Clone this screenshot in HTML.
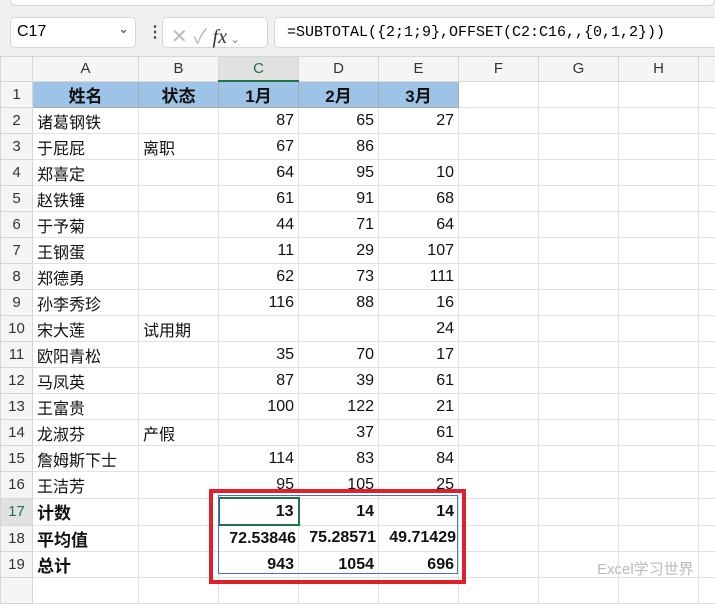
<!DOCTYPE html><html><head><meta charset="utf-8"><style>
body{margin:0;width:715px;height:587px;overflow:hidden;background:#fff;font-family:"Liberation Sans","Noto Sans CJK SC",sans-serif;position:relative}
.tb{position:absolute;left:0;top:0;width:715px;height:57px;background:#f0f0f0}
.box{position:absolute;background:#fff;border:1px solid #d6d6d6;border-radius:5px;box-sizing:border-box}
table{border-collapse:collapse;table-layout:fixed;position:absolute;left:0;top:56px;width:728px}
td{border:1px solid #e1e1e1;height:25px;padding:0 4px;font-size:16px;white-space:nowrap;overflow:hidden;color:#111}
tr.h td{height:23px;background:#f5f5f5;text-align:center;color:#333;font-size:15px;border-color:#d6d6d6}
td.r{background:#f5f5f5;text-align:center;color:#333;font-size:15px;padding:0;border-color:#d6d6d6}
.n{text-align:right}.b{font-weight:bold}
tr.t td.c{background:#9dc3e6;font-weight:bold;text-align:center;font-size:17px;border-color:#aaa}
</style></head><body>
<div class="tb"></div>
<div class="box" style="left:10px;top:-6px;width:705px;height:12px;border-radius:6px"></div>
<div class="box" style="left:10px;top:17px;width:126px;height:31px;font-size:16px;padding:5px 0 0 6px">C17<span style="position:absolute;right:6px;top:3px;font-size:13px;color:#444">&#8964;</span></div>
<div style="position:absolute;left:147px;top:22px;font-size:16px;color:#444;font-weight:bold">&#8942;</div>
<div class="box" style="left:162px;top:17px;width:106px;height:31px;color:#bbb;font-size:20px;padding:2px 0 0 8px">✕ ✓ <i style="color:#333;font-family:'Liberation Serif',serif">fx</i><span style="font-size:12px;color:#888"> &#8964;</span></div>
<div class="box" style="left:274px;top:17px;width:450px;height:31px;font-size:15px;padding:6px 0 0 12px;font-family:'Liberation Mono',monospace">=SUBTOTAL({2;1;9},OFFSET(C2:C16,,{0,1,2}))</div>
<table>
<colgroup><col style="width:32px"><col style="width:106px"><col style="width:80px"><col style="width:80px"><col style="width:80px"><col style="width:80px"><col style="width:80px"><col style="width:80px"><col style="width:80px"><col style="width:30px"></colgroup>
<tr class="h"><td></td><td>A</td><td>B</td><td style="background:#e1e1e1;color:#217346;border-bottom:2px solid #217346">C</td><td>D</td><td>E</td><td>F</td><td>G</td><td>H</td><td></td></tr>
<tr class="t"><td class="r">1</td><td class="c">姓名</td><td class="c">状态</td><td class="c">1月</td><td class="c">2月</td><td class="c">3月</td><td></td><td></td><td></td><td></td></tr>
<tr><td class="r">2</td><td>诸葛钢铁</td><td></td><td class="n">87</td><td class="n">65</td><td class="n">27</td><td></td><td></td><td></td><td></td></tr>
<tr><td class="r">3</td><td>于屁屁</td><td>离职</td><td class="n">67</td><td class="n">86</td><td class="n"></td><td></td><td></td><td></td><td></td></tr>
<tr><td class="r">4</td><td>郑喜定</td><td></td><td class="n">64</td><td class="n">95</td><td class="n">10</td><td></td><td></td><td></td><td></td></tr>
<tr><td class="r">5</td><td>赵铁锤</td><td></td><td class="n">61</td><td class="n">91</td><td class="n">68</td><td></td><td></td><td></td><td></td></tr>
<tr><td class="r">6</td><td>于予菊</td><td></td><td class="n">44</td><td class="n">71</td><td class="n">64</td><td></td><td></td><td></td><td></td></tr>
<tr><td class="r">7</td><td>王钢蛋</td><td></td><td class="n">11</td><td class="n">29</td><td class="n">107</td><td></td><td></td><td></td><td></td></tr>
<tr><td class="r">8</td><td>郑德勇</td><td></td><td class="n">62</td><td class="n">73</td><td class="n">111</td><td></td><td></td><td></td><td></td></tr>
<tr><td class="r">9</td><td>孙李秀珍</td><td></td><td class="n">116</td><td class="n">88</td><td class="n">16</td><td></td><td></td><td></td><td></td></tr>
<tr><td class="r">10</td><td>宋大莲</td><td>试用期</td><td class="n"></td><td class="n"></td><td class="n">24</td><td></td><td></td><td></td><td></td></tr>
<tr><td class="r">11</td><td>欧阳青松</td><td></td><td class="n">35</td><td class="n">70</td><td class="n">17</td><td></td><td></td><td></td><td></td></tr>
<tr><td class="r">12</td><td>马凤英</td><td></td><td class="n">87</td><td class="n">39</td><td class="n">61</td><td></td><td></td><td></td><td></td></tr>
<tr><td class="r">13</td><td>王富贵</td><td></td><td class="n">100</td><td class="n">122</td><td class="n">21</td><td></td><td></td><td></td><td></td></tr>
<tr><td class="r">14</td><td>龙淑芬</td><td>产假</td><td class="n"></td><td class="n">37</td><td class="n">61</td><td></td><td></td><td></td><td></td></tr>
<tr><td class="r">15</td><td>詹姆斯下士</td><td></td><td class="n">114</td><td class="n">83</td><td class="n">84</td><td></td><td></td><td></td><td></td></tr>
<tr><td class="r">16</td><td>王洁芳</td><td></td><td class="n">95</td><td class="n">105</td><td class="n">25</td><td></td><td></td><td></td><td></td></tr>
<tr><td class="r" style="background:#e1e1e1;color:#217346">17</td><td class="b" style="font-size:17px">计数</td><td></td><td class="n b" style="border:2px solid #217346">13</td><td class="n b">14</td><td class="n b">14</td><td></td><td></td><td></td><td></td></tr>
<tr><td class="r">18</td><td class="b" style="font-size:17px">平均值</td><td></td><td class="n b" style="padding:0 2px">72.53846</td><td class="n b" style="padding:0 2px">75.28571</td><td class="n b" style="padding:0 2px">49.71429</td><td></td><td></td><td></td><td></td></tr>
<tr><td class="r">19</td><td class="b" style="font-size:17px">总计</td><td></td><td class="n b">943</td><td class="n b">1054</td><td class="n b">696</td><td></td><td></td><td></td><td></td></tr>
<tr><td class="r"></td><td></td><td></td><td></td><td></td><td></td><td></td><td></td><td></td><td></td></tr>
</table>
<div style="position:absolute;left:218px;top:495px;width:240px;height:79px;border:1px solid #4472c4;box-sizing:border-box"></div>
<div style="position:absolute;left:209px;top:489px;width:257px;height:95px;border:4px solid #e0202a;box-sizing:border-box"></div>
<div style="position:absolute;left:597px;top:558px;font-size:15px;color:#bbb">Excel学习世界</div>
</body></html>
